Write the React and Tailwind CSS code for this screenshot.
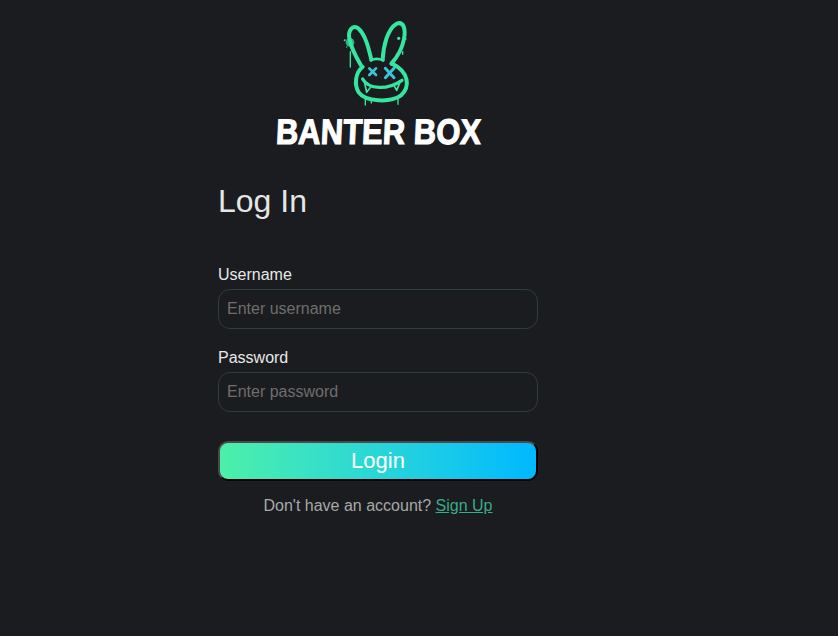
import React, { useState } from "react";

const Logo = () => (
  <svg width="100" height="95" viewBox="0 0 300 285" className="block" fill="none" strokeLinecap="round" strokeLinejoin="round">
    {/* ears */}
    <path d="M130 134 C122 100 112 56 88 38 C72 30 60 48 64 70 C70 104 88 132 102 156" stroke="#35e5a0" strokeWidth="12" />
    <path d="M164 134 C166 94 178 42 206 26 C226 18 234 40 228 72 C222 104 206 128 190 146" stroke="#35e5a0" strokeWidth="12" />
    <path d="M128 136 C140 130 152 130 166 136" stroke="#35e5a0" strokeWidth="8" />
    {/* head */}
    <path d="M104 156 C82 172 78 208 92 232 C112 260 186 264 218 242 C246 218 246 172 192 146" stroke="#35e5a0" strokeWidth="12" />
    {/* mouth */}
    <path d="M104 192 C122 224 178 226 222 196" stroke="#35e5a0" strokeWidth="10" />
    <path d="M110 204 L116 232 L130 214 M198 212 L206 226 L216 202" stroke="#35e5a0" strokeWidth="5" />
    {/* eyes */}
    <path d="M124 160 L144 180 M144 160 L124 180" stroke="#3cc6d8" strokeWidth="8" />
    <path d="M172 160 L198 188 M198 160 L172 188" stroke="#3cc6d8" strokeWidth="9" />
    {/* paint splatter and drips */}
    <circle cx="66" cy="82" r="13" fill="#35e5a0" opacity="0.75" />
    <circle cx="50" cy="76" r="3" fill="#35e5a0" />
    <circle cx="56" cy="96" r="2" fill="#35e5a0" />
    <circle cx="212" cy="70" r="5" fill="#35e5a0" />
    <circle cx="234" cy="72" r="2" fill="#35e5a0" />
    <path d="M67 110 V156 M112 250 V270 M130 256 V264 M210 246 V268 M224 110 V118" stroke="#35e5a0" strokeWidth="4" />
  </svg>
);

export default function App() {
  const [username, setUsername] = useState("");
  const [password, setPassword] = useState("");

  return (
    <div className="min-h-[636px] bg-[#1a1c20] font-['Liberation_Sans',Arial,sans-serif] pt-[15px]">
      <div className="w-[320px] ml-[218px]">
        <div className="flex flex-col items-center">
          <Logo />
          <div className="mt-[3px] h-[38px] leading-[38px] text-white text-[31px] font-bold whitespace-nowrap scale-y-[1.15] -skew-x-3 [-webkit-text-stroke:1px_white]">
            BANTER BOX
          </div>
        </div>

        <h1 className="mt-[32px] text-[32px] leading-[37px] text-[#e6e6e6]">Log In</h1>

        <form className="mt-[46px]" onSubmit={(e) => e.preventDefault()}>
          <label className="block text-base leading-[18px] text-[#e8e8e8] mb-[5px]">Username</label>
          <input
            value={username}
            onChange={(e) => setUsername(e.target.value)}
            placeholder="Enter username"
            className="block w-full h-10 px-2 rounded-xl border border-[#2c3f3d] bg-[#1a1c1f] text-base text-white outline-none placeholder:text-[#6e6e6e]"
          />

          <label className="block mt-[20px] text-base leading-[18px] text-[#e8e8e8] mb-[5px]">Password</label>
          <input
            type="password"
            value={password}
            onChange={(e) => setPassword(e.target.value)}
            placeholder="Enter password"
            className="block w-full h-10 px-2 rounded-xl border border-[#2c3f3d] bg-[#1a1c1f] text-base text-white outline-none placeholder:text-[#6e6e6e]"
          />

          <button
            type="submit"
            className="block w-full h-10 mt-[29px] pb-[2px] rounded-[10px] border-2 border-t-[#4a4a4a] border-l-[#4a4a4a] border-r-black border-b-black bg-gradient-to-r from-[#4cf0a8] to-[#00b8ff] text-[22px] text-white"
          >
            Login
          </button>
        </form>

        <p className="mt-[16px] text-center text-base leading-[18px] text-[#a8a8a8]">
          Don't have an account?{" "}
          <a href="#" className="underline text-[#38ab8a]">Sign Up</a>
        </p>
      </div>
    </div>
  );
}
